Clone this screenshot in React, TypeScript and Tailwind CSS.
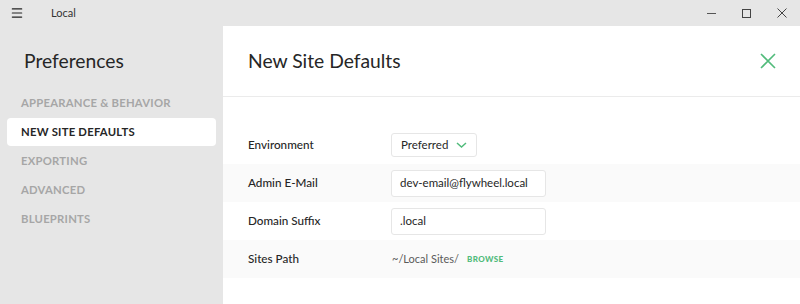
import { Menu } from "lucide-react";

const navItems = ["APPEARANCE & BEHAVIOR", "NEW SITE DEFAULTS", "EXPORTING", "ADVANCED", "BLUEPRINTS"];

function Row({ label, gray, children }: { label: string; gray?: boolean; children: React.ReactNode }) {
  return (
    <div className={`flex h-[38px] items-center pl-[25px] ${gray ? "bg-[#fafafa]" : "bg-white"}`}>
      <div className="w-[143px] text-[11.7px] font-medium text-[#262626]">{label}</div>
      {children}
    </div>
  );
}

export default function App() {
  return (
    <div className="flex h-[304px] w-[800px] flex-col overflow-hidden bg-[#e6e6e6] font-['Lato',sans-serif]">
      {/* Title bar */}
      <div className="flex h-[26px] items-center">
        <Menu className="ml-[10px] h-[14px] w-[14px] text-[#222]" strokeWidth={2} />
        <span className="ml-[27px] text-[11px] text-[#333]">Local</span>
        <div className="ml-auto flex h-full items-center">
          <div className="flex h-full w-[35px] items-center justify-center">
            <div className="h-px w-[9px] bg-[#555]" />
          </div>
          <div className="flex h-full w-[35px] items-center justify-center">
            <div className="h-[9px] w-[9px] border border-[#444]" />
          </div>
          <div className="flex h-full w-[35px] items-center justify-center">
            <svg width="10" height="10" viewBox="0 0 10 10">
              <path d="M0.5 0.5L9.5 9.5M9.5 0.5L0.5 9.5" stroke="#444" strokeWidth="1" />
            </svg>
          </div>
          <div className="w-[1px]" />
        </div>
      </div>

      <div className="flex flex-1">
        {/* Sidebar */}
        <div className="w-[223px] shrink-0">
          <h1 className="ml-[24px] mt-[22px] text-[19.3px] leading-[26px] text-[#262626]">Preferences</h1>
          <div className="mt-[15px] flex flex-col gap-[1px] px-[7px]">
            {navItems.map((item) => (
              <div
                key={item}
                className={`flex h-[28px] items-center rounded-[4px] pl-[14px] text-[11.3px] font-bold tracking-[0.02em] ${
                  item === "NEW SITE DEFAULTS" ? "bg-white text-[#262626]" : "text-[#a6a6a6]"
                }`}
              >
                {item}
              </div>
            ))}
          </div>
        </div>

        {/* Main */}
        <div className="flex-1 bg-white">
          <div className="flex h-[71px] items-center justify-between border-b border-[#ebebeb] pl-[25px] pr-[24px]">
            <h2 className="text-[19.3px] text-[#262626]">New Site Defaults</h2>
            <svg width="16" height="16" viewBox="0 0 16 16">
              <path d="M1 1L15 15M15 1L1 15" stroke="#51bb7b" strokeWidth="1.6" />
            </svg>
          </div>
          <div className="mt-[29px]">
            <Row label="Environment">
              <div className="flex h-[24px] items-center gap-[8px] rounded-[3px] border border-[#e6e6e6] px-[9px] text-[11.5px] text-[#262626]">
                Preferred
                <svg width="11" height="6" viewBox="0 0 11 6">
                  <path d="M1 1L5.5 5L10 1" stroke="#51bb7b" strokeWidth="1.5" fill="none" />
                </svg>
              </div>
            </Row>
            <Row label="Admin E-Mail" gray>
              <div className="flex h-[27px] w-[155px] items-center rounded-[3px] border border-[#e6e6e6] bg-white px-[8px] text-[11.5px] text-[#262626]">
                dev-email@flywheel.local
              </div>
            </Row>
            <Row label="Domain Suffix">
              <div className="flex h-[27px] w-[155px] items-center rounded-[3px] border border-[#e6e6e6] bg-white px-[8px] text-[11.5px] text-[#262626]">
                .local
              </div>
            </Row>
            <Row label="Sites Path" gray>
              <span className="ml-[1px] text-[11px] text-[#5a5a5a]">~/Local Sites/</span>
              <span className="ml-[8px] text-[8px] font-black tracking-[0.05em] text-[#51bb7b]">BROWSE</span>
            </Row>
          </div>
        </div>
      </div>
    </div>
  );
}
